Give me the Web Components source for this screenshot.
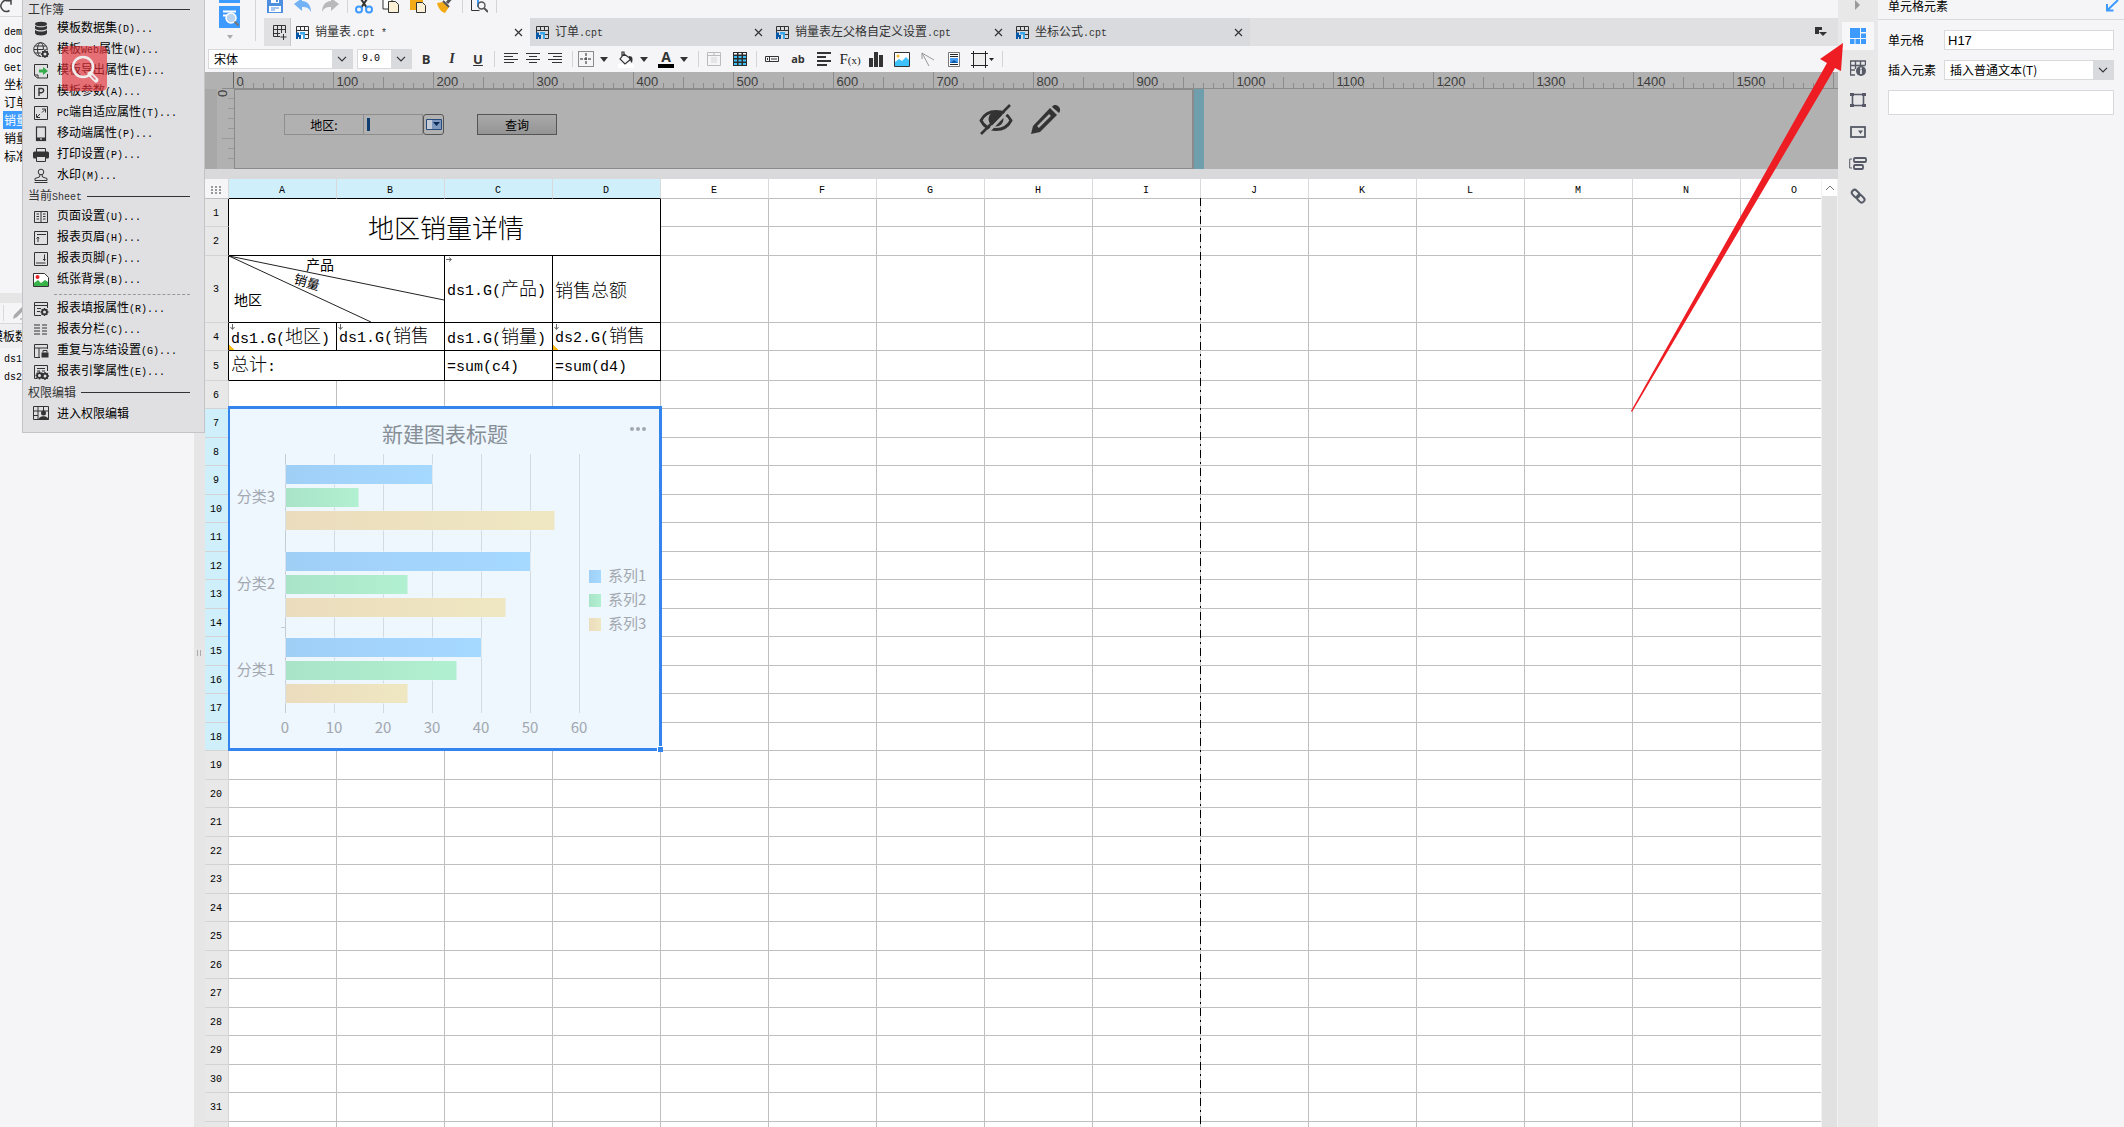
<!DOCTYPE html>
<html lang="zh-CN">
<head>
<meta charset="utf-8">
<title>报表设计器</title>
<style>
html,body{margin:0;height:100%;overflow:hidden}
body{font:12px/18px "Noto Sans CJK SC","Liberation Sans",sans-serif;color:#000;background:#f5f5f7}
</style>
</head>
<body>
<report-designer></report-designer>
<script>
const BASE = `
*{box-sizing:border-box}
.l{font-family:"Liberation Mono",monospace;font-size:10px}
svg{display:block;flex:none}
button{border:0;background:none;padding:0;margin:0;font:inherit;color:inherit;display:flex;align-items:center;justify-content:center}
`;
// Latin runs are set in a half-width monospaced face beside the full-width characters
const mix = t => t.replace(/[\x20-\x7e]+/g, s => `<span class="l">${s}</span>`);
const svg = (w, h, body, extra = '') => `<svg width="${w}" height="${h}" viewBox="0 0 ${w} ${h}" fill="none" ${extra}>${body}</svg>`;
const define = (name, css, html, after) => customElements.define(name, class extends HTMLElement {
  connectedCallback() {
    if (this.shadowRoot) return;
    const root = this.attachShadow({mode: 'open'});
    root.innerHTML = `<style>${BASE}${css}</style>` + (typeof html === 'function' ? html(this) : html);
    if (after) after(root, this);
  }
});

const GEAR = (x, y) => `<g transform="translate(${x} ${y})"><circle r="2.4" stroke="#333" stroke-width="1.8"/><path d="M0-4V-2M0 4V2M-4 0H-2M4 0H2M-2.8-2.8l1 1M2.8 2.8l-1-1M-2.8 2.8l1-1M2.8-2.8l-1 1" stroke="#333" stroke-width="1.4"/></g>`;
const box = '<path d="M1.5 1.5h13v13h-13z" stroke="#333" stroke-width="1"/>';
const ICON = {
  db: '<ellipse cx="8" cy="3" rx="6" ry="2.3" fill="#333"/><path d="M2 4.5c1 2.4 11 2.4 12 0v3c-1 2.4-11 2.4-12 0zM2 8.800c1 2.400 11 2.400 12 0v3.400c-1 2.900-11 2.900-12 0z" fill="#333"/>',
  web: '<circle cx="7.500" cy="7.500" r="6.800" stroke="#333"/><ellipse cx="7.500" cy="7.500" rx="3" ry="6.800" stroke="#333"/><path d="M1 7.500h13M2 4h11M2 11h6" stroke="#333"/><circle cx="12" cy="12" r="4.500" fill="#e0e0e3"/>' + GEAR(12, 12),
  exp: '<path d="M14.500 5V1.500h-13v11l3 2.500h10V11M1.500 12H5v3" stroke="#333"/><path d="M6 6.500h4V4l5 4-5 4V9.500H6z" fill="#37ac4c"/>',
  par: box + '<path d="M6 12V4.500h2.500a2 2 0 0 1 0 4.200H6" stroke="#333" stroke-width="1.400"/>',
  pc: box + '<path d="M9 4h3.500v3.500M12 4.500L9 7.500M7 12.500H3.500V9M4 12l3-3" stroke="#333"/>',
  mob: '<rect x="3.500" y="1" width="9" height="13.500" stroke="#333" stroke-width="1.200"/><path d="M3 11.500h10v3H3z" fill="#333"/><path d="M7 13h2" stroke="#fff"/>',
  prn: '<path d="M3.500 5V1.500h9V5" stroke="#333"/><rect y="4.500" width="16" height="7" rx="1.500" fill="#333"/><path d="M3.500 9.500h9v5h-9z" fill="#e0e0e3" stroke="#333"/>',
  wm: '<circle cx="8" cy="4" r="2.800" stroke="#333"/><path d="M7 6.500L6.500 9 2 10.500v2h12v-2L9.500 9 9 6.500M1.500 14.500h13" stroke="#333"/>',
  page: '<path d="M1.500 2.500h13v11h-13zM8 2v12M3.500 5H6M3.500 7.500H6M3.500 10H6M10 5h2.500M10 7.500h2.500M10 10h2.500" stroke="#333"/>',
  head: box + '<path d="M4 4.500h9M5 12V7M3.500 8.500L5 7l1 1.500" stroke="#333"/>',
  foot: box + '<path d="M3 12h9.500M11.500 3.500V10M10 8.500h2.500" stroke="#333"/>',
  bg: '<path d="M.5 1.500h11l4 4v9H.5z" fill="#fff" stroke="#333"/><path d="M1 14v-3l4-3 3 3 4-3 3 2v4z" fill="#37b34a"/><circle cx="4.500" cy="5" r="2" fill="#e8222a"/>',
  fill: '<path d="M14.500 7V1.500h-13v13H8M1.500 4.500h13M4 7.500h4M4 10.500h3" stroke="#333"/>' + GEAR(11.500, 11),
  col: '<path d="M1 3h6M1 6h6M1 9h6M1 12h6M9 3h5M9 6h5M9 9h5M9 12h5" stroke="#333" stroke-width="1.200"/>',
  lock: '<path d="M14.500 6V1.500h-13v13H7M1.500 5h13M6 5v9.500" stroke="#333"/><path d="M8.500 9.500h7v5h-7z" fill="#333"/><path d="M10 9.500V7.500h4v2" stroke="#333"/>',
  eng: '<path d="M14.500 7V1.500h-13v13H4M4 4.500h8M4 7h3M9 7h3" stroke="#333"/>' + GEAR(6.500, 11.500) + GEAR(12, 12),
  perm: '<path d="M.5 1.500h15v13H.5zM5 1.500v13M10.500 1.500V6M.5 6h15M.5 10.500H5" stroke="#333"/><circle cx="10.500" cy="8" r="2.500" fill="#333"/><path d="M5.500 15c0-5 10-5 10 0z" fill="#333"/>'
};

define('menu-heading', `:host{display:flex;align-items:center;height:20px;padding:0 14px 0 5px;gap:5px;color:#333}
i{flex:1;height:1px;background:#333}`, h => `<span>${mix(h.textContent.trim())}</span><i></i>`);

define('menu-item', `:host{display:block}
button{width:100%;height:21px;justify-content:flex-start;padding-left:10px;gap:8px;white-space:nowrap}`,
  h => `<button>${svg(16, 16, ICON[h.getAttribute('icon')])}<span>${mix(h.textContent.trim())}</span></button>`);

define('template-menu', `:host{display:block;position:absolute;left:22px;top:0;width:183px;height:433px;background:#e0e0e3;border:1px solid #c3c3c8;border-top:0;z-index:5}
menu-heading:first-child{height:18px}
hr{border:0;border-top:1px dashed #999;margin:4px 14px 3px 31px}
.mark{position:absolute;left:39px;top:46px;width:45px;height:45px;border-radius:5px;background:#e8323bA6;pointer-events:none}`,
`<div><menu-heading>工作簿</menu-heading>
<menu-item icon="db">模板数据集(D)...</menu-item><menu-item icon="web">模板Web属性(W)...</menu-item>
<menu-item icon="exp">模板导出属性(E)...</menu-item><menu-item icon="par">模板参数(A)...</menu-item>
<menu-item icon="pc">PC端自适应属性(T)...</menu-item><menu-item icon="mob">移动端属性(P)...</menu-item>
<menu-item icon="prn">打印设置(P)...</menu-item><menu-item icon="wm">水印(M)...</menu-item>
<menu-heading>当前Sheet</menu-heading>
<menu-item icon="page">页面设置(U)...</menu-item><menu-item icon="head">报表页眉(H)...</menu-item>
<menu-item icon="foot">报表页脚(F)...</menu-item><menu-item icon="bg">纸张背景(B)...</menu-item><hr>
<menu-item icon="fill">报表填报属性(R)...</menu-item><menu-item icon="col">报表分栏(C)...</menu-item>
<menu-item icon="lock">重复与冻结设置(G)...</menu-item><menu-item icon="eng">报表引擎属性(E)...</menu-item>
<menu-heading>权限编辑</menu-heading><menu-item icon="perm">进入权限编辑</menu-item></div>
<div class="mark">${svg(45, 45, '<circle cx="21" cy="21" r="10" stroke="#eee" stroke-width="2.500"/><path d="M28 28l6 6" stroke="#eee" stroke-width="5" stroke-linecap="round"/><path d="M29.500 29.500l4 4" stroke="#e0707a" stroke-width="1.500"/>')}</div>`);

define('side-panel', `:host{display:flex;flex-direction:column;width:205px;border-right:11px solid #e6e6e6;overflow:hidden;background:#f5f5f7}
.top{height:17px;border-bottom:1px solid #d9d9db}
ul{list-style:none;margin:0;padding:4px 0 0 3px;height:276px;white-space:nowrap}
li{height:18px;padding-left:1px}li.on{background:#3d9bff;color:#fff}
.gap{height:10px;background:#e6e6e6}
.tools{height:21px;border-bottom:1px solid #d9d9db;display:flex;align-items:center;padding-left:3px;gap:8px}
.tools i{width:1px;height:16px;background:#d9d9db}
.ds{height:24px;line-height:23px;background:#efeff1;text-indent:-9px}
ul.sets{padding-top:0}`,
`<div class="top">${svg(14, 14, '<path d="M9 1A5.500 5.500 0 1 0 9.500 10.500M6 .8h5v4" stroke="#444" stroke-width="1.500"/>')}</div>
<ul>${['dem', 'doc', 'Get', '坐标', '订单', '销量', '销量', '标准'].map((t, i) => `<li${i == 5 ? ' class="on"' : ''}>${mix(t)}</li>`).join('')}</ul>
<div class="gap"></div><div class="tools"><i></i>${svg(14, 14, '<path d="M1 13l1-4L11 0l3 2-9 9z" fill="#aaa"/><path d="M8 13h6" stroke="#999"/>')}</div>
<div class="ds">模板数</div><ul class="sets"><li>${mix('ds1')}</li><li>${mix('ds2')}</li></ul>`);

const CPT = svg(15, 15, '<path d="M1.500 1.500h12v12M1.500 8V1.500M1 5.500h12.500M5.500 1v5M9.500 1v5M9.500 9.500h4M13.500 13.500H10" stroke="#333"/><path d="M1 7.500h3v2.500h2v4H4v-2H3v2H1z" fill="#0758a8"/><path d="M5 7h5v7H8V9.500H5z" fill="#3ba7e8"/>');

define('doc-tab', `:host{display:flex;align-items:center;width:240px;padding:0 5px;gap:5px;color:#333;background:#d9dadd}
:host([active]){background:#f5f5f7;border-left:1px solid #c8c8cc;padding-left:4px}
span{white-space:nowrap}a{flex:1;color:inherit;text-decoration:none}button{width:13px;height:13px}`,
  h => `${CPT}<a href="#"><span>${mix(h.textContent.trim())}</span></a><button aria-label="关闭">${svg(9, 9, '<path d="M1 1l7 7M8 1L1 8" stroke="#333" stroke-width="1.200"/>')}</button>`);

define('tab-strip', `:host{display:flex;height:28px;background:#e0e0e2}
.new{width:26px;background:#e0e0e2;padding-left:4px}.end{margin-left:auto;width:34px}
:host>*{flex:none}`,
`<button class="new" aria-label="新建">${svg(16, 16, '<path d="M14.500 9V1.500h-12v11H9M2.500 5.500h12M2.500 9.500H9M6.500 1.500v11M10.500 1.500V9M12.500 10v6M9.500 13h6" stroke="#333"/>')}</button>
<doc-tab active>销量表.cpt *</doc-tab><doc-tab>订单.cpt</doc-tab><doc-tab>销量表左父格自定义设置.cpt</doc-tab><doc-tab>坐标公式.cpt</doc-tab>
<button class="end" aria-label="标签列表">${svg(14, 12, '<path d="M1 1h7v3H5v4H1z" fill="#333"/><path d="M5 6h8l-4 4z" fill="#333"/>')}</button>`);

define('drop-down', `:host{display:grid;height:20px;border:1px solid #d9d9db;background:#fff}
select{appearance:none;grid-area:1/1;border:0;background:none;padding:0 0 0 5px;font:12px/18px "Noto Sans CJK SC",sans-serif;color:#000;width:100%;height:18px}
:host([mono]) select{font:10px/18px "Liberation Mono",monospace;padding-left:4px}
i{grid-area:1/1;justify-self:end;width:20px;background:#d9dadd;display:grid;place-items:center;pointer-events:none}`,
  h => `<select aria-label="${h.getAttribute('label')}"><option>${h.textContent.trim()}</option></select><i>${svg(10, 6, '<path d="M1 .8l4 4 4-4" stroke="#333" stroke-width="1.200"/>')}</i>`);

define('quick-bar', `:host{display:flex;height:18px;overflow:hidden;padding-left:3px}
button{width:27px;height:16px;flex:none;align-items:flex-end;justify-content:flex-start}.last{width:18px}
i{width:16px;flex:none;display:flex;justify-content:center}i:after{content:"";width:1px;height:13px;background:#d4d4d8}`,
`<button aria-label="保存">${svg(16, 18, '<path d="M0 0h16v15H0z" fill="#4e8fe0"/><path d="M4 0h8v5H4zM2 8h12v6H2z" fill="#fff"/><path d="M9 1h2v3H9z" fill="#4e8fe0"/><path d="M4 10h8M4 12h4" stroke="#4e8fe0"/>')}</button>
<button aria-label="撤销">${svg(18, 18, '<path d="M0 6l8-6v3c6 0 9 5 9 11-2-4-4-5-9-5v4z" fill="#72b2f5"/>')}</button>
<button class="last" aria-label="重做">${svg(18, 18, '<path d="M18 6l-8-6v3C4 3 1 8 1 14c2-4 4-5 9-5v4z" fill="#b9b9bb"/>')}</button><i></i>
<button aria-label="剪切">${svg(18, 20, '<path d="M4 0l8 12M14 0L6 12" stroke="#333" stroke-width="2"/><circle cx="4" cy="13.500" r="3" stroke="#3d9bff" stroke-width="2"/><circle cx="14" cy="13.500" r="3" stroke="#3d9bff" stroke-width="2"/>')}</button>
<button aria-label="复制">${svg(18, 20, '<path d="M1 1h9v12H1z" fill="#fff" stroke="#333"/><path d="M6.500 5.500h7l3 3v8h-10z" fill="#fbf1d6" stroke="#333"/>')}</button>
<button aria-label="粘贴">${svg(18, 20, '<path d="M1 0h13v14H1z" fill="#f2ab17"/><path d="M7.500 6.500h6l3 3v7h-9z" fill="#fbf1d6" stroke="#333"/>')}</button>
<button class="last" aria-label="格式刷">${svg(18, 20, '<path d="M11 7l6-7" stroke="#555" stroke-width="3"/><path d="M1 7l6-1 6 5-4 6C5 16 2 12 1 7z" fill="#f2ab17"/><path d="M7 5l6 6" stroke="#555" stroke-width="2"/>')}</button><i></i>
<button class="last" aria-label="预览">${svg(18, 20, '<path d="M1.500 0v14.500h8M13.500 0v4" stroke="#333"/><path d="M4 3h8M8 3v8" stroke="#3d9bff" stroke-width="2"/><circle cx="11.500" cy="9.500" r="3.500" stroke="#555" stroke-width="1.400"/><path d="M14 12l4 4" stroke="#555" stroke-width="2"/>')}</button><i></i>`);

const B = (n, s, w = 26) => `<button aria-label="${n}" style="width:${w}px">${s}</button>`;
const CAR = n => B(n, svg(8, 5, '<path d="M0 0h8L4 5z" fill="#333"/>'), 14);
define('format-bar', `:host{display:flex;align-items:center;height:26px;padding-left:3px}
:host>*{flex:none}
.font{width:145px}.size{width:55px;margin:0 1px 0 4px}
button{height:22px}i{width:6px;display:flex;justify-content:center}i:after{content:"";width:1px;height:16px;background:#d4d4d8}
.g{display:flex;padding:0 3px}.h{display:flex;gap:0}.h span{width:4px}
b,em,u{font:bold 13px/18px "Open Sans",sans-serif;color:#333}em{font:italic bold 14px/18px "Liberation Serif",serif}
.a{border-bottom:4px solid #000;width:16px;height:18px;line-height:13px;font-size:14px}
.ab{font-size:11px}.fx{font:15px/18px "Liberation Serif",serif;color:#222}.fx small{font-size:11px}`,
`<drop-down class="font" label="字体">宋体</drop-down><drop-down class="size" mono label="字号">9.0</drop-down>
${B('加粗', '<b>B</b>')}${B('斜体', '<em>I</em>')}${B('下划线', '<u>U</u>')}<i></i>
<div class="g">${B('左对齐', svg(14, 12, '<path d="M0 .5h14M0 3.500h9M0 6.500h14M0 9.500h10" stroke="#333"/>'), 22)}${B('居中', svg(14, 12, '<path d="M0 .5h14M3 3.500h8M0 6.500h14M3 9.500h8" stroke="#333"/>'), 22)}${B('右对齐', svg(14, 12, '<path d="M0 .5h14M5 3.500h9M0 6.500h14M4 9.500h10" stroke="#333"/>'), 22)}</div><i></i>
<div class="h">${B('边框', svg(16, 16, '<path d="M.5.5h15v15H.5z" stroke="#222" stroke-dasharray="1 1"/><path d="M8 2v12M2 8h12" stroke="#222" stroke-dasharray="3 1"/>'), 22)}${CAR('边框选项')}<span></span>
${B('填充', svg(18, 17, '<path d="M1 13h16v4H1z" fill="#fff"/><path d="M7 3l7 5-6 5-5-5zM7 5V1H5v4" stroke="#333" stroke-width="1.200"/><path d="M12 5c4 0 4 3 3 7-2-1-1-3-3-4z" fill="#333"/>'), 22)}${CAR('填充选项')}<span></span>
${B('字体颜色', '<b class="a">A</b>', 22)}${CAR('颜色选项')}<span></span></div><i></i>
${B('合并', svg(14, 14, '<path d="M.5.500h13v13H.5zM.5 3.500h13M7 0v3" stroke="#bbb"/><path d="M4 5h6v6H4z" fill="#e5e5e8"/>'))}
${B('单元格', svg(14, 14, '<path d="M0 0h14v14H0z" fill="#2b2b2b"/><path d="M1 4h3v2H1zM5.500 4h3v2h-3zM10 4h3v2h-3zM1 7.500h3v2H1zM5.500 7.500h3v2h-3zM10 7.500h3v2h-3zM1 11h3v2H1zM5.500 11h3v2h-3zM10 11h3v2h-3z" fill="#3fc1fb"/><path d="M1 1h3v1.500H1zM5.500 1h3v1.500h-3zM10 1h3v1.500h-3z" fill="#fff"/>'))}<i></i>
${B('控件', svg(14, 6, '<path d="M.5.500h13v5H.5zM4.500 0v6M6 3h6M2.500 2v2" stroke="#333"/>'))}${B('文本', '<b class="ab">ab</b>')}
${B('富文本', svg(14, 15, '<path d="M0 1h14M0 5h9M0 9h14M0 13h10" stroke="#333" stroke-width="2"/>'))}${B('公式', '<span class="fx">F<small>(x)</small></span>')}
${B('图表', svg(14, 15, '<path d="M0 6h4v9H0zM5 0h4v15H5zM10 3h4v12h-4z" fill="#333"/>'))}
${B('图片', svg(16, 15, '<path d="M.5.500h15v14H.5z" fill="#fff" stroke="#333"/><path d="M1 14v-4l4-3 3 2 4-4 3 3v6z" fill="#3fc1fb"/><circle cx="4" cy="4" r="1.500" fill="#fdb933"/>'))}
${B('斜线', svg(14, 15, '<path d="M1 1l7 13M1 1l12 7M1 1v6" stroke="#999"/>'))}
${B('子报表', svg(12, 15, '<path d="M.5.500h11v14H.5z" fill="#fff" stroke="#777"/><path d="M2 2.500h8M2 4.500h8M2 12.500h8" stroke="#222"/><path d="M2 6h8v5H2z" fill="#4a9cf0"/><path d="M2 11l4-3 4 3z" fill="#0b5aa8"/>'))}
${B('悬浮元素', svg(24, 17, '<path d="M2.500 2.500h13v12h-13z" fill="#eee"/><path d="M0 2.500h17M0 14.500h17M2.500 0v17M14.500 0v17" stroke="#222"/><path d="M18 7h5l-2.500 3z" fill="#222"/>'), 32)}<i></i>`);

define('tool-area', `:host{display:flex;height:72px;background:#f5f5f7;flex:none;flex-wrap:wrap}
.first{display:flex;width:100%;height:46px}
.view{width:51px;height:41px;border-right:1px solid #d4d4d8;flex-direction:column;justify-content:flex-start;gap:7px;margin-right:8px;flex:none}
.rest{flex:1;min-width:0}format-bar{width:100%}`,
`<div class="first"><button class="view" aria-label="模板">${svg(22, 28, '<path d="M0 0h21v3H0zM0 6h21v22H0z" fill="#3d9bff"/><path d="M4 11.500h13M4 15.500h5" stroke="#fff" stroke-width="2"/><circle cx="12" cy="18" r="5" fill="#b8d4ee" stroke="#fff" stroke-width="1.500"/><path d="M15.500 21.500l4 4" stroke="#777" stroke-width="2"/>')}${svg(6, 4, '<path d="M0 0h6L3 4z" fill="#aaa"/>')}</button>
<div class="rest"><quick-bar></quick-bar><tab-strip></tab-strip></div></div><format-bar></format-bar>`);

// horizontal ruler: one unit is one pixel, numbered every hundred
const hRuler = () => {
  let s = '';
  for (let n = 0; n <= 1600; n += 10) {
    const x = 28.5 + n, y = n % 100 == 0 ? 0 : n % 50 == 0 ? 5 : 11;
    s += `<path d="M${x} ${y}V17" stroke="${n ? '#8c8c8c' : '#666'}"/>`;
    if (n % 100 == 0 && n < 1600) s += `<text x="${x + 3}" y="14">${n}</text>`;
  }
  return `<svg class="hr" width="100%" height="17">${s}<path d="M17 16.500H1700" stroke="#8c8c8c"/></svg>`;
};
const vRuler = () => {
  let s = '';
  for (let n = 10; n < 80; n += 10) s += `<path d="M${n % 50 ? 23 : 17} ${n - .5}H29" stroke="#999"/>`;
  return `<svg width="29" height="80"><path d="M0 0h12v80H0z" fill="#a8a8a8"/>${s}<text x="-8" y="22" transform="rotate(-90)">0</text></svg>`;
};
define('query-form', `:host{display:block;height:97px;background:#b1b1b1;overflow:hidden;flex:none}
text{font:13px "Liberation Sans",sans-serif;fill:#3c3c3c}
.row{display:flex;height:80px}
form{margin:0;width:960px;border:1px solid #8a8a8a;border-right-width:2px;display:flex;align-items:flex-start;padding:24px 0 0 49px}
label,input,.pick,.go{height:21px;border:1px solid #8e8e8e}
label{width:80px;text-align:center;line-height:20px}
input{width:59px;border-left:0;background:none;outline:0;padding:0}
.fld{display:grid}.fld>*{grid-area:1/1}.fld svg{margin:4px 0 0 3px;pointer-events:none}
.pick{width:21px;border:1px solid #555;border-radius:3px}
.go{width:80px;border:1px solid #555;background:linear-gradient(#a9a9a9,#949494);margin-left:33px}
.eye,.pen{margin-top:-10px}.eye{margin-left:422px}.pen{margin-left:17px}
.bar{width:10px;background:#6f9fac}`,
`${hRuler()}<div class="row">${vRuler()}<form><label for="area">地区:</label><div class="fld"><input id="area">${svg(4, 13, '<path d="M0 0h3v13H0z" fill="#0f3f70"/>')}</div>
<button type="button" class="pick" aria-label="选择">${svg(16, 11, '<path d="M.5.500h15v10H.5z" fill="#c4ccd8" stroke="#274b7a"/><path d="M6 1h9v9H6z" fill="#7e98be"/><path d="M7 3h7l-3.500 4z" fill="#0b2c5c"/>')}</button>
<button type="button" class="go">查询</button>
<button type="button" class="eye" aria-label="隐藏">${svg(34, 31, '<path d="M2 16.500C8 4.500 26 4.500 32 16.500 26 28.500 8 28.500 2 16.500z" stroke="#333" stroke-width="2.800"/><circle cx="17" cy="15" r="7.500" fill="#333"/><path d="M4 33L33 3" stroke="#b1b1b1" stroke-width="3"/><path d="M2 30L31 1" stroke="#333" stroke-width="2.500"/>')}</button>
<button type="button" class="pen" aria-label="编辑">${svg(32, 31, '<path d="M1 30l2-8L20 4l7 7-17 17z" fill="#333"/><path d="M8 23L20 11" stroke="#b1b1b1" stroke-width="2.500"/><path d="M22 3c3-5 11 1 7 6z" fill="#333"/>')}</button></form><div class="bar"></div></div>`);

define('bar-chart', `:host{display:block;height:345px;margin:-3px -2px -1px -1px;border:3px solid #3484ee;border-left-width:2px;background:#eef6fe;position:relative}
text{font:15px "Noto Sans CJK SC",sans-serif;fill:#a2a8af}
.t{font-size:21px;fill:#868e96}.e{text-anchor:end}.m{text-anchor:middle}
i{position:absolute;right:-4px;bottom:-4px;width:6px;height:6px;background:#3484ee;border:1px solid #fff;border-width:1px 0 0 1px}`,
() => {
  const cols = [['a', '#a0cff6', '#a6d9ff'], ['b', '#a9e4c8', '#b1f0d0'], ['c', '#ebdcbd', '#efe7c2']];
  const groups = [['3', 465, [30, 15, 55]], ['2', 552, [50, 25, 45]], ['1', 638, [40, 35, 25]]];
  let s = '<defs>' + cols.map(c => `<linearGradient id="${c[0]}"><stop stop-color="${c[1]}"/><stop offset="1" stop-color="${c[2]}"/></linearGradient>`).join('') + '</defs>';
  for (let n = 0; n <= 6; n++) s += `<path d="M${285.5 + n * 49} 454V713" stroke="${n ? '#d2dae2' : '#c3cbd4'}"/><text class="m" x="${285 + n * 49}" y="733">${n * 10}</text>`;
  s += '<path d="M281 627.500h5" stroke="#c3cbd4"/>';
  for (const [name, y, vals] of groups) {
    vals.forEach((v, i) => s += `<rect x="286" y="${y + i * 23}" width="${v * 4.9 - 1}" height="19" fill="url(#${cols[i][0]})" stroke="#eef6fe" paint-order="stroke"/>`);
    s += `<text class="e" x="275" y="${y + 37}">分类${name}</text>`;
  }
  cols.forEach((c, i) => s += `<rect x="589" y="${570 + i * 24}" width="12" height="13" fill="url(#${c[0]})"/><text x="608" y="${581 + i * 24}">系列${i + 1}</text>`);
  s += '<text class="m t" x="445" y="442">新建图表标题</text><g fill="#a2a8af"><circle cx="632" cy="429" r="2"/><circle cx="638" cy="429" r="2"/><circle cx="644" cy="429" r="2"/></g>';
  return `<svg width="429" height="339" viewBox="230 409 429 339">${s}</svg><i></i>`;
});

define('sheet-grid', `:host{display:block;flex:1;min-width:0;overflow:hidden;position:relative;background:#fff}
table{border-collapse:separate;border-spacing:0;table-layout:fixed;width:1644px}
th,td{padding:0;border:0 solid #bfbfbf;border-width:0 1px 1px 0;overflow:visible}
th{font:10px/14px "Liberation Mono",monospace;padding:2px 1px 0 0}
thead th{border-right-color:#d9d9db;padding-top:4px}thead tr{height:20px}
tbody th{background:#e8e8e8;border-color:#d4d4d6}
thead th.on,tbody th.on{background:#cfeffb}
thead th:first-child{background:#f5f5f7}thead th:first-child svg{margin:0 auto}
thead .on{border-bottom-color:#000}
tbody th.k{border-right-color:#000}
td.k{border-color:#000;font-size:18px;line-height:24px;font-weight:300;position:relative}
td .l{font-size:15px}
.c{overflow:hidden;padding:0 2px;word-break:break-all}
.title{text-align:center;font-size:26px;line-height:32px;padding-left:3px}
.s{height:27px}.u{line-height:22px}.w{white-space:nowrap}
td.y .c{background:linear-gradient(45deg,#fdb813 0 4px,transparent 4px)}
.ar{position:absolute;left:1px;top:1px}
text{font:14px "Noto Sans CJK SC",sans-serif;fill:#000}
.brk{position:absolute;left:995px;top:19px;bottom:0;width:1px;background:repeating-linear-gradient(#000 0 8px,#c9c9c9 8px 12px,#000 12px 14px,#c9c9c9 14px 18px)}`,
() => {
  const down = svg(5, 6, '<path d="M2.500 0v5M.5 3l2 2.500 2-2.500" stroke="#666"/>', 'class="ar"');
  const right = svg(6, 5, '<path d="M0 2.500h5M3 .5l2.500 2-2.500 2" stroke="#666"/>', 'class="ar"');
  const L = 'ABCDEFGHIJKLMNO'.split('');
  const dots = svg(11, 9, [0, 4, 8].map(x => [0, 3, 6].map(y => `<path d="M${x} ${y}h2v2h-2z" fill="#999"/>`).join('')).join(''));
  const head = `<tr><th>${dots}</th>${L.map((c, i) => `<th${i < 4 ? ' class="on"' : ''}>${c}</th>`).join('')}</tr>`;
  const cell = (t, cls = '', mark = '', span = 1) => `<td class="k ${cls}" colspan="${span}"><div class="c ${cls}">${mix(t)}</div>${mark}</td>`;
  const diag = svg(215, 66, '<path d="M0 0L215 44M0 0L142 66" stroke="#222"/><text x="77" y="14">产品</text><text x="5" y="49">地区</text><text x="64" y="27" transform="rotate(17 64 27)" style="font-size:13px">销量</text>');
  const spec = {
    1: '<td class="k" colspan="4" rowspan="2"><div class="title">地区销量详情</div></td>', 2: '',
    3: `<td class="k" colspan="2">${diag}</td>` + cell('ds1.G(产品)', 'w', right) + cell('销售总额'),
    4: cell('ds1.G(地区)', 's y', down) + cell('ds1.G(销售员)', 's u', down) + cell('ds1.G(销量)', 's') + cell('ds2.G(销售总额)', 's y u', down),
    5: cell('总计:', '', '', 2) + cell('=sum(c4)') + cell('=sum(d4)'),
    7: '<td colspan="4" rowspan="12"><bar-chart></bar-chart></td>'
  };
  let body = '';
  for (let r = 1; r <= 32; r++) {
    const h = r == 3 ? 67 : r < 3 ? 27 + r : r % 2 ? 29 : 28;
    const cls = r <= 5 ? 'k' : r >= 7 && r <= 18 ? 'on' : '';
    const first = r in spec ? spec[r] : r > 7 && r < 19 ? '' : '<td></td>'.repeat(4);
    body += `<tr style="height:${h}px"><th class="${cls}">${r}</th>${first}${'<td></td>'.repeat(11)}</tr>`;
  }
  return `<table><colgroup><col style="width:24px">${'<col style="width:108px">'.repeat(15)}</colgroup><thead>${head}</thead><tbody>${body}</tbody></table><div class="brk"></div>`;
});

define('sheet-area', `:host{display:flex;flex:1;min-height:0;border-top:10px solid #d9d9db}
.scroll{width:17px;background:#e1e1e1;border:solid #f2f2f2;border-width:0 1px}
button{width:100%;height:17px;background:#fff}`,
`<sheet-grid></sheet-grid><div class="scroll"><button aria-label="向上滚动">${svg(10, 6, '<path d="M1 5l4-4 4 4" stroke="#777"/>')}</button></div>`);

define('tool-rail', `:host{display:flex;flex-direction:column;align-items:center;width:40px;background:#e8e8e8;flex:none}
button{width:32px;height:28px;margin-bottom:4px;flex:none}.tri{height:10px;margin-bottom:12px}.on{background:#f7f7f9}`,
`<button class="tri" aria-label="收起">${svg(6, 10, '<path d="M0 0l5 5-5 5z" fill="#999"/>')}</button>
<button class="on" aria-label="单元格元素">${svg(16, 16, '<path d="M0 0h10v10H0zM11 0h5v4h-5zM11 5.500h5V10h-5zM0 11h4.500v5H0zM5.500 11H10v5H5.500zM11 11h5v5h-5z" fill="#3d9bff"/>')}</button>
<button aria-label="单元格属性">${svg(16, 16, '<path d="M15.500 5V1h-15v14H5M.5 5.500h15M5.500 1v8M10.500 1v4M.5 10H5" stroke="#555a66" stroke-width="1.400"/><circle cx="11" cy="11" r="5" fill="#555a66"/><path d="M11 7.500v2M11 10v4" stroke="#fff" stroke-width="1.500"/>')}</button>
<button aria-label="悬浮元素">${svg(16, 16, '<path d="M2.500 2.500h11v11h-11z" stroke="#555a66" stroke-width="1.600"/><path d="M0 1h4v3H0zM12 1h4v3h-4zM0 12h4v3H0zM12 12h4v3h-4z" fill="#555a66"/>')}</button>
<button aria-label="控件设置">${svg(16, 12, '<rect x="1" y="1" width="14" height="10" stroke="#555a66" stroke-width="1.800"/><path d="M8 4.500h5L10.500 8z" fill="#555a66"/>')}</button>
<button aria-label="条件属性">${svg(18, 14, '<path d="M3 2H.7v9H3" stroke="#555a66"/><rect x="5" y="1" width="12" height="4" rx="1" stroke="#555a66" stroke-width="1.800"/><rect x="5" y="8" width="9" height="4" rx="1" stroke="#555a66" stroke-width="1.800"/>')}</button>
<button aria-label="超级链接">${svg(16, 16, '<g stroke="#555a66" stroke-width="2"><rect x="-4" y="-2.800" width="8.500" height="5.600" rx="2.800" transform="translate(5.500 5.500) rotate(45)"/><rect x="-4.500" y="-2.800" width="8.500" height="5.600" rx="2.800" transform="translate(10.800 10.800) rotate(45)"/></g>')}</button>`);

define('cell-panel', `:host{display:flex;flex-direction:column;width:246px;background:#f5f5f7;flex:none}
header{display:flex;justify-content:space-between;height:20px;border-bottom:1px solid #d9d9db;padding:0 5px 0 10px;line-height:12px}
.f{display:flex;flex-direction:column;gap:10px;padding:10px 10px}
.r{display:grid;grid-template-columns:56px 1fr;align-items:center}
input{height:20px;border:1px solid #d9d9db;background:#fff;padding:0 3px;font:13px "Liberation Sans",sans-serif;width:100%;border-radius:0;outline:0}
.big{height:25px}`,
`<header><span>单元格元素</span>${svg(13, 12, '<path d="M1 10.500L12 0M1 4v6.500h6.500" stroke="#3d9bff" stroke-width="2"/>')}</header>
<div class="f"><div class="r"><label for="c">单元格</label><input id="c" value="H17"></div>
<div class="r"><span>插入元素</span><drop-down label="插入元素">插入普通文本(T)</drop-down></div><input class="big" aria-label="文本"></div>`);

define('report-designer', `:host{display:flex;height:100vh;overflow:hidden;position:relative}
side-panel{flex:none}main{flex:1;min-width:0;display:flex;flex-direction:column}
.grip{position:absolute;left:197px;top:650px;width:4px;height:6px;border:solid #aaa;border-width:0 1px}
.arrow{position:absolute;right:281px;top:40px;z-index:9;pointer-events:none}`,
`<side-panel></side-panel><div class="grip"></div><template-menu></template-menu>
<main><tool-area></tool-area><query-form></query-form><sheet-area></sheet-area></main>
<tool-rail></tool-rail><cell-panel></cell-panel>
<svg class="arrow" width="213" height="374" viewBox="1630 40 213 374"><path d="M1843 43L1841 71 1835 68 1632 412 1631 411 1827 63 1820 59z" fill="#ee1c23"/></svg>`);
</script>
</body>
</html>
